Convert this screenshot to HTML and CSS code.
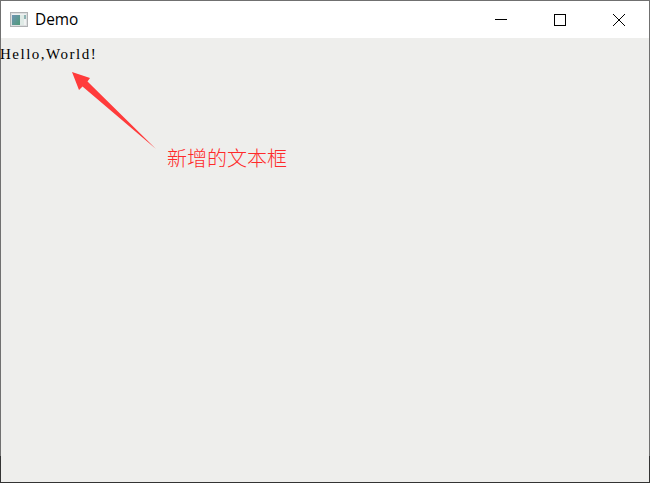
FILE: index.html
```html
<!DOCTYPE html>
<html lang="zh">
<head>
<meta charset="utf-8">
<title>Demo</title>
<link rel="stylesheet" href="styles.css">
</head>
<body>
<div class="window">
  <div class="frame">
    <header class="titlebar">
      <svg class="app-icon" width="18" height="15" viewBox="0 0 18 15">
        <defs><linearGradient id="g" x1="0" y1="0" x2="1" y2="1"><stop offset="0" stop-color="#6f94b4"/><stop offset="1" stop-color="#4f9a78"/></linearGradient></defs>
        <rect x="0.500" y="0.500" width="17" height="14" fill="#f0f2f2" stroke="#b0b2b4"/>
        <rect x="1.500" y="1.500" width="15" height="12" fill="none" stroke="#dcdfe0"/>
        <rect x="2" y="3" width="8" height="10" fill="url(#g)"/>
        <rect x="10" y="3" width="4" height="10" fill="#dfeae6"/>
        <rect x="14" y="3" width="2" height="4" fill="#8fb4b4"/>
      </svg>
      <span class="title">Demo</span>
      <div class="controls">
        <div class="ctl"><svg width="12" height="12" viewBox="0 0 12 12"><path d="M0 5.500H12" stroke="#000" fill="none"/></svg></div>
        <div class="ctl"><svg width="12" height="12" viewBox="0 0 12 12"><rect x="0.5" y="0.5" width="11" height="11" stroke="#000" fill="none"/></svg></div>
        <div class="ctl"><svg width="14" height="14" viewBox="0 0 14 14"><path d="M1 1L13 13M13 1L1 13" stroke="#000" fill="none"/></svg></div>
      </div>
    </header>
    <main class="content">
      <div class="label">Hello,World!</div>
      <svg class="arrow" width="100" height="92" viewBox="0 0 100 92"><path d="M11 13L29 19L26.500 22.500L95 90L21.500 27.500L18 31Z" fill="#ff3b3b"/></svg>
      <div class="note">新增的文本框</div>
    </main>
  </div>
</div>
</body>
</html>
```
FILE: styles.css
```css
html, body {
  margin: 0;
  padding: 0;
  height: 100%;
  overflow: hidden;
}
.window {
  box-sizing: border-box;
  width: 650px;
  height: 483px;
  padding: 1px;
  background: linear-gradient(#707070 0, #707070 456px, #333 456px, #333 100%);
}
.frame {
  height: 100%;
  display: flex;
  flex-direction: column;
  background: #eeeeec;
}
.titlebar {
  height: 37px;
  background: #fff;
  display: flex;
  align-items: center;
  padding-left: 9px;
  flex: none;
}
.app-icon {
  margin-right: 7px;
}
.title {
  font: 15.4px "Open Sans", "Liberation Sans", sans-serif;
  color: #000;
  flex: 1;
}
.controls {
  display: flex;
  padding-right: 1px;
}
.ctl {
  width: 59px;
  height: 37px;
  display: flex;
  align-items: center;
  justify-content: center;
}
.content {
  flex: 1;
  position: relative;
}
.label {
  font: 15px/16px "Liberation Serif", serif;
  letter-spacing: 1.5px;
  color: #000;
  padding-top: 8px;
  margin-left: -1px;
}
.arrow {
  position: absolute;
  left: 60px;
  top: 21px;
}
.note {
  position: absolute;
  left: 166px;
  top: 107px;
  font: 300 20px/26px "Noto Sans CJK SC", sans-serif;
  color: #ff2a2a;
}
```
